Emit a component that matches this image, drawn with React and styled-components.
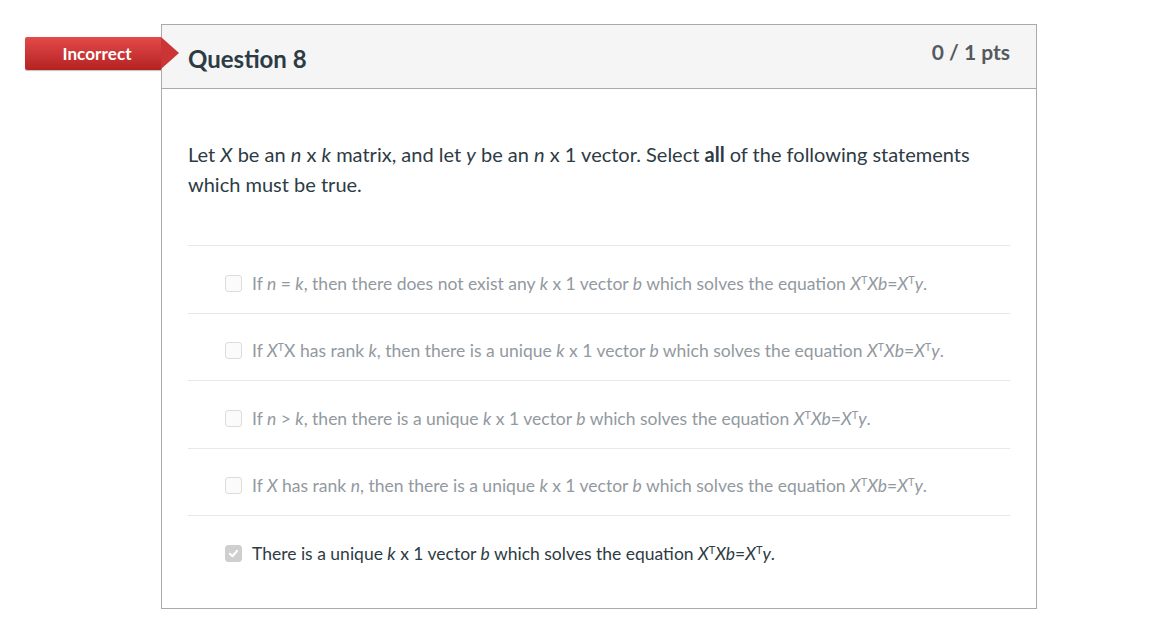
import React from "react";
import styled, { createGlobalStyle } from "styled-components";

const GlobalStyle = createGlobalStyle`
  body {
    margin: 0;
    background: #fff;
    font-family: Lato, "Open Sans", "Liberation Sans", sans-serif;
  }
`;

const Page = styled.div`
  padding: 24px 0 0 161px;
`;

const Card = styled.div`
  position: relative;
  width: 874px;
  border: 1px solid #aaa;
  background: #fff;
`;

const Badge = styled.div`
  box-sizing: border-box;
  position: absolute;
  left: -137px;
  top: 12px;
  width: 136px;
  height: 33px;
  padding-left: 8px;
  display: flex;
  align-items: center;
  justify-content: center;
  color: #fff;
  font-size: 17px;
  font-weight: 700;
  letter-spacing: 0.1px;
  background: linear-gradient(#e44a4a, #b42222);
  border-radius: 2px 0 0 2px;
  box-shadow: 0 1px 1px rgba(0, 0, 0, 0.25);
  &::after {
    content: "";
    position: absolute;
    right: -18px;
    top: 0;
    width: 0;
    height: 0;
    border-top: 16.5px solid transparent;
    border-bottom: 16.5px solid transparent;
    border-left: 18px solid #cb3535;
  }
`;

const Header = styled.div`
  height: 63px;
  display: flex;
  justify-content: space-between;
  align-items: flex-start;
  padding: 0 26px 0 26px;
  background: #f5f5f5;
  border-bottom: 1px solid #aaa;
`;

const Title = styled.h2`
  margin: 19px 0 0;
  font-size: 24px;
  font-weight: 700;
  color: #2d3b45;
`;

const Points = styled.div`
  margin-top: 14px;
  font-size: 21px;
  font-weight: 700;
  color: #555a60;
`;

const Body = styled.div`
  padding: 50px 26px 25px 26px;
`;

const Prompt = styled.p`
  margin: 0 0 46px;
  font-size: 20px;
  line-height: 30px;
  color: #2d3b45;
  max-width: 800px;
`;

const Answers = styled.div`
  display: flex;
  flex-direction: column;
`;

const Answer = styled.label`
  box-sizing: border-box;
  display: flex;
  align-items: center;
  gap: 10px;
  height: 67.5px;
  padding: 8px 0 0 37px;
  border-top: 1px solid #e8e8e8;
  font-size: 17.5px;
  color: ${(p) => (p.checked ? "#2d3b45" : "#92999f")};
`;

const Box = styled.span`
  width: 15px;
  height: 15px;
  flex: none;
  border-radius: 3px;
  border: 1px solid ${(p) => (p.checked ? "#cfcfcf" : "#dcdcdc")};
  background: ${(p) => (p.checked ? "#cfcfcf" : "#fbfbfb")};
  display: flex;
  align-items: center;
  justify-content: center;
`;

const Sup = styled.sup`
  font-size: 11px;
  vertical-align: 6px;
  line-height: 0;
`;

const Eq = () => (
  <>
    <i>X</i>
    <Sup>T</Sup>
    <i>Xb</i>=<i>X</i>
    <Sup>T</Sup>
    <i>y</i>.
  </>
);

const Check = ({ checked }) => (
  <Box checked={checked}>
    {checked && (
      <svg width="11" height="11" viewBox="0 0 12 12">
        <path
          d="M2 6.3 L4.8 9 L10 3"
          fill="none"
          stroke="#fff"
          strokeWidth="2.2"
          strokeLinecap="round"
          strokeLinejoin="round"
        />
      </svg>
    )}
  </Box>
);

const answers = [
  {
    text: (
      <>
        If <i>n</i> = <i>k</i>, then there does not exist any <i>k</i> x 1 vector <i>b</i> which solves the
        equation <Eq />
      </>
    ),
  },
  {
    text: (
      <>
        If <i>X</i>
        <Sup>T</Sup>X has rank <i>k</i>, then there is a unique <i>k</i> x 1 vector <i>b</i> which solves the
        equation <Eq />
      </>
    ),
  },
  {
    text: (
      <>
        If <i>n</i> &gt; <i>k</i>, then there is a unique <i>k</i> x 1 vector <i>b</i> which solves the
        equation <Eq />
      </>
    ),
  },
  {
    text: (
      <>
        If <i>X</i> has rank <i>n</i>, then there is a unique <i>k</i> x 1 vector <i>b</i> which solves the
        equation <Eq />
      </>
    ),
  },
  {
    checked: true,
    text: (
      <>
        There is a unique <i>k</i> x 1 vector <i>b</i> which solves the equation <Eq />
      </>
    ),
  },
];

export default function App() {
  return (
    <Page>
      <GlobalStyle />
      <Card>
        <Badge>Incorrect</Badge>
        <Header>
          <Title>Question 8</Title>
          <Points>0 / 1 pts</Points>
        </Header>
        <Body>
          <Prompt>
            Let <i>X</i> be an <i>n</i> x <i>k</i> matrix, and let <i>y</i> be an <i>n</i> x 1 vector. Select{" "}
            <b>all</b> of the following statements which must be true.
          </Prompt>
          <Answers>
            {answers.map((a, i) => (
              <Answer key={i} checked={a.checked}>
                <Check checked={a.checked} />
                <span>{a.text}</span>
              </Answer>
            ))}
          </Answers>
        </Body>
      </Card>
    </Page>
  );
}
